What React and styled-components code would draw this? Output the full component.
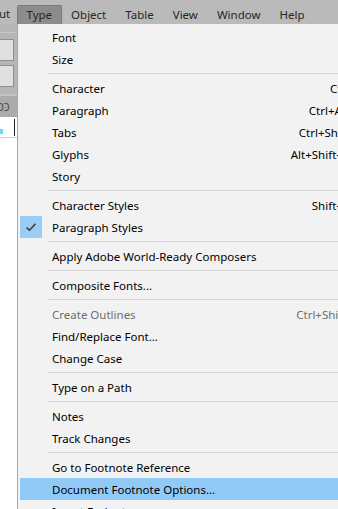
import styled, { createGlobalStyle } from "styled-components";

const GlobalStyle = createGlobalStyle`
  html, body {
    margin: 0;
    padding: 0;
    width: 338px;
    height: 509px;
    overflow: hidden;
    background: #ffffff;
  }
  body {
    font-family: "Noto Sans", "Open Sans", sans-serif;
    font-size: 11.5px;
  }
`;

const items = [
  { label: "Font" },
  { label: "Size" },
  { sep: true },
  { label: "Character", shortcut: "Ctrl+T" },
  { label: "Paragraph", shortcut: "Ctrl+Alt+T" },
  { label: "Tabs", shortcut: "Ctrl+Shift+T" },
  { label: "Glyphs", shortcut: "Alt+Shift+F11" },
  { label: "Story" },
  { sep: true },
  { label: "Character Styles", shortcut: "Shift+F11" },
  { label: "Paragraph Styles", checked: true },
  { sep: true },
  { label: "Apply Adobe World-Ready Composers" },
  { sep: true },
  { label: "Composite Fonts..." },
  { sep: true },
  { label: "Create Outlines", shortcut: "Ctrl+Shift+O", disabled: true },
  { label: "Find/Replace Font..." },
  { label: "Change Case" },
  { sep: true },
  { label: "Type on a Path" },
  { sep: true },
  { label: "Notes" },
  { label: "Track Changes" },
  { sep: true },
  { label: "Go to Footnote Reference" },
  { label: "Document Footnote Options...", active: true },
  { label: "Insert Endnote" },
];

const menuBar = ["ut", "Type", "Object", "Table", "View", "Window", "Help"];

const App = () => {
  return (
    <Page>
      <GlobalStyle />
      <MenuBar>
        {menuBar.map((m) => (
          <MenuBarItem key={m} $open={m === "Type"}>
            {m}
          </MenuBarItem>
        ))}
      </MenuBar>
      <Workspace>
        <SidePanel>
          <PanelTop />
          <ControlBox />
          <ControlBox />
          <TabStrip>
            <TabLabel>כּכ</TabLabel>
          </TabStrip>
          <Ruler>
            <RulerMark />
            <RulerTick>1</RulerTick>
          </Ruler>
          <Pasteboard />
        </SidePanel>
      </Workspace>
      <Dropdown>
        {items.map((it, i) =>
          it.sep ? (
            <Separator key={i} />
          ) : (
            <Item key={i} $active={it.active} $disabled={it.disabled}>
              <CheckCell $checked={it.checked}>
                {it.checked && (
                  <svg width="12" height="10" viewBox="0 0 12 10">
                    <polyline
                      points="1.5,5.5 4.5,8.2 10.5,1.8"
                      fill="none"
                      stroke="#3c3c3c"
                      strokeWidth="1.6"
                    />
                  </svg>
                )}
              </CheckCell>
              <Label>{it.label}</Label>
              {it.shortcut && <Shortcut>{it.shortcut}</Shortcut>}
            </Item>
          )
        )}
      </Dropdown>
    </Page>
  );
};

const Page = styled.div`
  position: relative;
  width: 338px;
  height: 509px;
  overflow: hidden;
  background: #ffffff;
`;

const MenuBar = styled.div`
  display: flex;
  align-items: flex-end;
  height: 24px;
  background: #bababa;
  color: #262626;
`;

const MenuBarItem = styled.div`
  box-sizing: border-box;
  height: 19px;
  line-height: 18px;
  padding: 0 8.5px;
  border: 1px solid ${(p) => (p.$open ? "#7b7b7b" : "transparent")};
  border-bottom: none;
  border-radius: 2px 2px 0 0;
  background: ${(p) => (p.$open ? "#8c8c8c" : "transparent")};
  white-space: nowrap;
  &:first-child {
    width: 17px;
    padding: 0;
    border: none;
    text-indent: -1px;
  }
`;

const Workspace = styled.div`
  display: flex;
  height: 485px;
`;

const SidePanel = styled.div`
  width: 17px;
  display: flex;
  flex-direction: column;
  background: #b6b6b6;
`;

const PanelTop = styled.div`
  height: 8px;
  border-bottom: 1px solid #c9c9c9;
  margin-bottom: 6px;
`;

const ControlBox = styled.div`
  width: 13px;
  height: 20px;
  background: #e0e0e0;
  border: 1px solid #8f8f8f;
  border-left: none;
  margin-bottom: 4px;
`;

const TabStrip = styled.div`
  margin-top: 3px;
  height: 21px;
  background: #acacac;
  border-top: 2px solid #c4c4c4;
  display: flex;
  align-items: center;
  overflow: hidden;
`;

const TabLabel = styled.span`
  color: #4a4a4a;
  font-size: 12px;
  margin-left: -2px;
  white-space: nowrap;
`;

const Ruler = styled.div`
  position: relative;
  height: 20px;
  background: #ffffff;
  border-bottom: 1px solid #d0d0d0;
`;

const RulerMark = styled.div`
  position: absolute;
  left: 0;
  top: 12px;
  width: 3px;
  height: 5px;
  background: #5fe0f0;
`;

const RulerTick = styled.div`
  position: absolute;
  left: 14px;
  top: 2px;
  height: 17px;
  border-left: 1px solid #222;
  font-size: 9px;
  line-height: 10px;
  color: #c05000;
  padding-left: 1px;
`;

const Pasteboard = styled.div`
  flex: 1;
  background: #ffffff;
`;

const Dropdown = styled.div`
  position: absolute;
  left: 17px;
  top: 24px;
  width: 360px;
  height: 520px;
  box-sizing: border-box;
  padding: 2px 2px 0 2px;
  background: #f2f2f2;
  border-left: 1px solid #a8a8a8;
  color: #000000;
`;

const Item = styled.div`
  display: flex;
  align-items: center;
  height: 22px;
  background: ${(p) => (p.$active ? "#91c9f7" : "transparent")};
  color: ${(p) => (p.$disabled ? "#6d6d6d" : "#000000")};
  white-space: nowrap;
`;

const CheckCell = styled.div`
  width: 22px;
  height: 22px;
  flex: none;
  display: flex;
  align-items: center;
  justify-content: center;
  background: ${(p) => (p.$checked ? "#99cdf5" : "transparent")};
`;

const Label = styled.span`
  margin-left: 10px;
  flex: 1;
`;

const Shortcut = styled.span`
  padding-right: 13px;
`;

const Separator = styled.div`
  height: 7px;
  display: flex;
  align-items: center;
  padding-left: 28px;
  &::after {
    content: "";
    flex: 1;
    height: 1px;
    background: #d7d7d7;
  }
`;

export default App;
